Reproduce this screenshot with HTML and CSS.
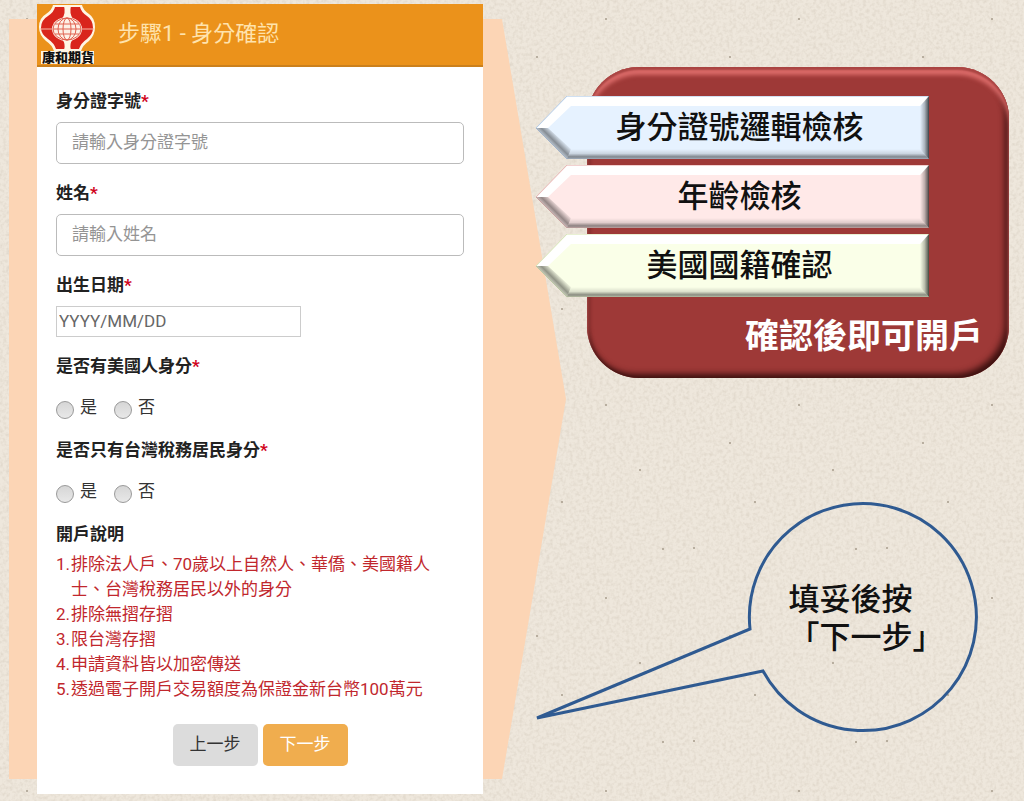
FILE: index.html
```
<!DOCTYPE html>
<html lang="zh-Hant">
	<head>
		<meta charset="utf-8">
		<title>步驟1 - 身分確認</title>
		<link rel="stylesheet" href="styles.css">
	</head>
	<body>
		<!-- paper texture -->
		<svg class="paper" aria-hidden="true">
			<defs>
				<filter id="grain" x="0" y="0" width="100%" height="100%">
					<feTurbulence type="fractalNoise" baseFrequency="0.3" numOctaves="2" seed="4"/>
					<feColorMatrix values="0 0 0 0 0.52  0 0 0 0 0.45  0 0 0 0 0.36  0.6 0 0 0 -0.24"/>
				</filter>
				<pattern id="specks" width="193" height="193" patternUnits="userSpaceOnUse">
					<g fill="#a79c8c">
						<circle cx="115" cy="162" r="1"/>
						<circle cx="27" cy="19" r="1"/>
						<circle cx="61" cy="84" r="1"/>
						<circle cx="151" cy="57" r="1"/>
						<circle cx="84" cy="163" r="1"/>
						<circle cx="176" cy="116" r="1"/>
					</g>
				</pattern>
			</defs>
			<rect width="100%" height="100%" filter="url(#grain)"/>
			<rect width="100%" height="100%" fill="url(#specks)"/>
		</svg>

		<div class="slide">
			<div class="step">
				<div class="panel">
					<header class="panel-header">
						<svg class="logo" width="59" height="63" viewBox="0 0 59 63" role="img" aria-label="康和期貨">
							<path d="M16 2H45Q46 7 52 11Q58 15 58 24Q58 32 52 38Q46 42 44 48H57V61H4V48H17Q15 42 9 38Q2 32 2 24Q2 15 9 11Q15 7 16 2Z" fill="#fff5e4"/>
							<path d="M18 4H43Q44 9 50 13Q56 17 56 25Q56 31 50 36Q44 40 42 46H19Q17 40 11 36Q4 31 4 25Q4 17 11 13Q17 9 18 4Z" fill="#d9251c"/>
							<path d="M27 3H34Q32 10 36 16H25Q29 10 27 3ZM27 47H34Q32 41 36 36H25Q29 41 27 47Z" fill="#fff5e4"/>
							<ellipse cx="30" cy="26" rx="15" ry="12" fill="#fdf0e6"/>
							<g fill="none" stroke="#e0604f" stroke-width="1">
								<ellipse cx="30" cy="26" rx="14" ry="11"/>
								<ellipse cx="30" cy="26" rx="9" ry="11"/>
								<ellipse cx="30" cy="26" rx="4" ry="11"/>
								<path d="M18 21H42M16 26H44M18 31H42"/>
							</g>
							<path d="M3 26H15M45 26H57" stroke="#f7b9a6" stroke-width="1"/>
							<text class="logo-name" x="31" y="59" text-anchor="middle">康和期貨</text>
						</svg>
						<h1>步驟1 - 身分確認</h1>
					</header>

					<form onsubmit="return false">
						<div class="field">
							<label for="id-number">身分證字號<span class="required">*</span></label>
							<input type="text" id="id-number" class="text-box" placeholder="請輸入身分證字號">
						</div>
						<div class="field">
							<label for="full-name">姓名<span class="required">*</span></label>
							<input type="text" id="full-name" class="text-box" placeholder="請輸入姓名">
						</div>
						<div class="field">
							<label for="birthday">出生日期<span class="required">*</span></label>
							<input type="text" id="birthday" class="date-box" placeholder="YYYY/MM/DD">
						</div>
						<fieldset class="field">
							<legend>是否有美國人身分<span class="required">*</span></legend>
							<div class="choices">
								<label><input type="radio" name="us-person">是</label>
								<label><input type="radio" name="us-person">否</label>
							</div>
						</fieldset>
						<fieldset class="field">
							<legend>是否只有台灣稅務居民身分<span class="required">*</span></legend>
							<div class="choices">
								<label><input type="radio" name="tw-tax">是</label>
								<label><input type="radio" name="tw-tax">否</label>
							</div>
						</fieldset>

						<h2>開戶說明</h2>
						<ol class="notes">
							<li>排除法人戶、70歲以上自然人、華僑、美國籍人士、台灣稅務居民以外的身分</li>
							<li>排除無摺存摺</li>
							<li>限台灣存摺</li>
							<li>申請資料皆以加密傳送</li>
							<li>透過電子開戶交易額度為保證金新台幣100萬元</li>
						</ol>

						<div class="buttons">
							<button type="button" class="prev">上一步</button>
							<button type="button" class="next">下一步</button>
						</div>
					</form>
				</div>
			</div>

			<div class="side">
				<!-- shared gradients for the ribbon bevels -->
				<svg class="defs" aria-hidden="true">
					<defs>
						<linearGradient id="shade-bottom" x1="0" y1="0" x2="0" y2="1">
							<stop offset="0" stop-color="#000" stop-opacity="0"/>
							<stop offset="0.45" stop-color="#000" stop-opacity="0.12"/>
							<stop offset="0.8" stop-color="#000" stop-opacity="0.46"/>
							<stop offset="1" stop-color="#000" stop-opacity="0.2"/>
						</linearGradient>
						<linearGradient id="shade-right">
							<stop offset="0" stop-color="#000" stop-opacity="0"/>
							<stop offset="0.5" stop-color="#000" stop-opacity="0.25"/>
							<stop offset="1" stop-color="#000" stop-opacity="0.7"/>
						</linearGradient>
						<linearGradient id="shade-tip" gradientUnits="userSpaceOnUse" x1="24" y1="41" x2="17" y2="48">
							<stop offset="0" stop-color="#000" stop-opacity="0"/>
							<stop offset="0.7" stop-color="#000" stop-opacity="0.42"/>
							<stop offset="1" stop-color="#000" stop-opacity="0.25"/>
						</linearGradient>
					</defs>
				</svg>

				<section class="card">
					<div class="ribbon blue">
						<svg viewBox="0 0 393 63" preserveAspectRatio="none" aria-hidden="true">
							<path class="face" d="M0 32L31 0H393V63H31Z"/>
							<path fill="#fff" d="M1 32L31 1H393L384 10H35L12 32Z"/>
							<path fill="url(#shade-tip)" d="M0 32H12L35 53L31 63Z"/>
							<path fill="url(#shade-bottom)" d="M35 53H384L393 63H31Z"/>
							<path fill="url(#shade-right)" d="M393 0L384 10V53L393 63Z"/>
						</svg>
						<span>身分證號邏輯檢核</span>
					</div>
					<div class="ribbon pink">
						<svg viewBox="0 0 393 63" preserveAspectRatio="none" aria-hidden="true">
							<path class="face" d="M0 32L31 0H393V63H31Z"/>
							<path fill="#fff" d="M1 32L31 1H393L384 10H35L12 32Z"/>
							<path fill="url(#shade-tip)" d="M0 32H12L35 53L31 63Z"/>
							<path fill="url(#shade-bottom)" d="M35 53H384L393 63H31Z"/>
							<path fill="url(#shade-right)" d="M393 0L384 10V53L393 63Z"/>
						</svg>
						<span>年齡檢核</span>
					</div>
					<div class="ribbon green">
						<svg viewBox="0 0 393 63" preserveAspectRatio="none" aria-hidden="true">
							<path class="face" d="M0 32L31 0H393V63H31Z"/>
							<path fill="#fff" d="M1 32L31 1H393L384 10H35L12 32Z"/>
							<path fill="url(#shade-tip)" d="M0 32H12L35 53L31 63Z"/>
							<path fill="url(#shade-bottom)" d="M35 53H384L393 63H31Z"/>
							<path fill="url(#shade-right)" d="M393 0L384 10V53L393 63Z"/>
						</svg>
						<span>美國國籍確認</span>
					</div>
					<p class="result">確認後即可開戶</p>
				</section>

				<div class="callout">
					<svg viewBox="0 0 443 231" aria-hidden="true">
						<path d="M214 127A113.500 113.500 0 1 1 227 169L1 216Z" fill="none" stroke="#2f5a91" stroke-width="3"/>
					</svg>
					<p>填妥後按<br>「下一步」</p>
				</div>
			</div>
		</div>
	</body>
</html>
```
FILE: styles.css
```
* {
	box-sizing: border-box;
}

body {
	margin: 0;
	background-color: #eee7dc;
	font-family: Roboto, "Noto Sans CJK TC", sans-serif;
	font-size: 17px;
	line-height: 24px;
	color: #333;
}

.paper {
	position: absolute;
	top: 0;
	left: 0;
	width: 100%;
	height: 100%;
	z-index: -2;
}

.slide {
	display: grid;
	grid-template-columns: 536fr 488fr;
	min-height: 100vh;
}

/* form side */

.step {
	position: relative;
	padding: 4px 53px 7px 37px;
}

/* big peach arrow behind the panel */
.step::before {
	content: "";
	position: absolute;
	z-index: -1;
	top: 19px;
	right: -30px;
	bottom: 22px;
	left: 9px;
	background-color: #fcd5b5;
	clip-path: polygon(0 0, 493px 0, 100% 50%, 493px 100%, 0 100%);
}

.panel {
	height: 100%;
	background-color: #fff;
}

.panel-header {
	display: flex;
	align-items: center;
	gap: 22px;
	height: 63px;
	background-color: #eb921b;
	border-bottom: 2px solid #cb801d;
}

.logo {
	flex: none;
}

.logo-name {
	font-family: "Noto Sans CJK TC", sans-serif;
	font-size: 13px;
	font-weight: 900;
	fill: #111;
}

h1 {
	margin: 0;
	padding-bottom: 2px;
	font-size: 22px;
	font-weight: 400;
	color: #ffe3ad;
}

form {
	padding: 22px 19px 28px;
}

.field {
	margin: 0 0 17px;
	padding: 0;
	border: 0;
}

.field > label,
legend,
h2 {
	display: block;
	margin: 0 0 9px;
	padding: 0;
	font-size: 17px;
	font-weight: bold;
	color: #222;
}

.required {
	color: #d0021b;
}

input {
	display: block;
	font: inherit;
}

.text-box {
	width: 100%;
	height: 42px;
	padding: 0 15px 3px;
	border: 1px solid #bbb;
	border-radius: 5px;
}

.date-box {
	width: 60%;
	height: 31px;
	padding: 0 2px 2px;
	border: 1px solid #ccc;
}

.text-box::placeholder {
	color: #949494;
}

.date-box::placeholder {
	color: #666;
}

.choices {
	display: flex;
	gap: 17px;
	height: 34px;
	padding-top: 8px;
}

.choices label {
	display: flex;
	gap: 6px;
}

.choices input {
	appearance: none;
	width: 18px;
	height: 18px;
	margin: 6px 0 0;
	border: 1px solid #999;
	border-radius: 50%;
	background: linear-gradient(#d6d6d6, #e8e8e8);
}

.choices input:checked {
	border: 5px solid #666;
}

h2 {
	margin-bottom: 6px;
}

.notes {
	margin: 0;
	padding: 0;
	list-style: none;
	counter-reset: note;
	line-height: 25px;
	color: #c1272d;
}

.notes li {
	display: flex;
	counter-increment: note;
}

.notes li::before {
	content: counter(note) ".";
	flex: 0 0 15px;
}

.buttons {
	display: flex;
	justify-content: center;
	gap: 5px;
	margin-top: 22px;
}

button {
	height: 42px;
	padding: 0 17px 2px;
	border: 0;
	border-radius: 5px;
	font: inherit;
	cursor: pointer;
}

.prev {
	background-color: #dcdcdc;
	color: #333;
}

.next {
	background-color: #f0ad4e;
	color: #fff;
}

/* notes side */

.side {
	padding: 67px 15px 0 0;
	font-family: "Liberation Sans", "Noto Sans CJK TC", sans-serif;
	color: #111;
}

.defs {
	position: absolute;
	width: 0;
	height: 0;
}

.card {
	display: flex;
	flex-direction: column;
	gap: 6px;
	margin-left: 51px;
	padding: 29px 0 17px;
	border-radius: 52px;
	background-color: #9e3937;
	box-shadow: inset 0 3px 2px #a94442, inset 0 8px 4px #dc6c6a, inset -4px -4px 6px #3d1110, inset 2px 0 4px #5a1c1b;
}

.ribbon {
	position: relative;
	display: grid;
	place-items: center;
	height: 63px;
	margin: 0 80px 0 -51px;
	padding-left: 14px;
	font-size: 31px;
	font-weight: 500;
}

.ribbon svg {
	position: absolute;
	top: 0;
	left: 0;
	width: 100%;
	height: 100%;
}

.ribbon span {
	position: relative;
}

.blue .face {
	fill: #e6f2ff;
	stroke: #b9cde5;
}

.pink .face {
	fill: #ffe9e8;
	stroke: #e6b9b8;
}

.green .face {
	fill: #faffe8;
	stroke: #d7e4bd;
}

.result {
	margin: 8px 26px 0;
	font-size: 34px;
	font-weight: 700;
	line-height: 50px;
	text-align: right;
	color: #fff;
}

.callout {
	position: relative;
	max-width: 443px;
	margin-top: 124px;
}

.callout svg {
	display: block;
	width: 100%;
}

/* text lies inside the bubble */
.callout p {
	position: absolute;
	top: 34%;
	left: 57%;
	margin: 0;
	font-size: 31px;
	font-weight: 500;
	line-height: 38px;
	white-space: nowrap;
}
```
